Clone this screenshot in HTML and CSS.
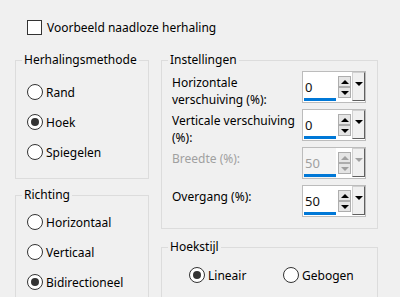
FILE: index.html
```
<!DOCTYPE html>
<html>

<head>
    <title>Naadloze herhaling</title>
    <link rel="stylesheet" href="styles.css">
</head>

<body>
    <!-- Preview toggle -->
    <label class="check-row">
        <input type="checkbox">
        <span>Voorbeeld naadloze herhaling</span>
    </label>

    <div class="columns">
        <div class="col col-left">
            <!-- Repeat method -->
            <fieldset class="group group-method">
                <legend>Herhalingsmethode</legend>
                <div class="group-body">
                    <label class="radio"><input type="radio" name="method"><span>Rand</span></label>
                    <label class="radio"><input type="radio" name="method" checked><span>Hoek</span></label>
                    <label class="radio"><input type="radio" name="method"><span>Spiegelen</span></label>
                </div>
            </fieldset>

            <!-- Direction -->
            <fieldset class="group group-dir">
                <legend>Richting</legend>
                <div class="group-body">
                    <label class="radio"><input type="radio" name="dir"><span>Horizontaal</span></label>
                    <label class="radio"><input type="radio" name="dir"><span>Verticaal</span></label>
                    <label class="radio"><input type="radio" name="dir" checked><span>Bidirectioneel</span></label>
                </div>
            </fieldset>
        </div>

        <div class="col col-right">
            <!-- Settings with spinners -->
            <fieldset class="group group-settings">
                <legend>Instellingen</legend>
                <div class="group-body settings-grid">
                    <div class="field-label">Horizontale<br>verschuiving (%):</div>
                    <div class="spin">
                        <div class="spin-value"><span>0</span><i class="spin-bar"></i></div>
                        <div class="spin-arrows">
                            <span class="spin-btn"><i class="tri tri-up"></i></span>
                            <span class="spin-btn"><i class="tri tri-down"></i></span>
                        </div>
                        <span class="spin-drop"><i class="tri tri-down"></i></span>
                    </div>

                    <div class="field-label">Verticale verschuiving<br>(%):</div>
                    <div class="spin">
                        <div class="spin-value"><span>0</span><i class="spin-bar"></i></div>
                        <div class="spin-arrows">
                            <span class="spin-btn"><i class="tri tri-up"></i></span>
                            <span class="spin-btn"><i class="tri tri-down"></i></span>
                        </div>
                        <span class="spin-drop"><i class="tri tri-down"></i></span>
                    </div>

                    <div class="field-label disabled">Breedte (%):</div>
                    <div class="spin disabled">
                        <div class="spin-value"><span>50</span><i class="spin-bar"></i></div>
                        <div class="spin-arrows">
                            <span class="spin-btn"><i class="tri tri-up"></i></span>
                            <span class="spin-btn"><i class="tri tri-down"></i></span>
                        </div>
                        <span class="spin-drop"><i class="tri tri-down"></i></span>
                    </div>

                    <div class="field-label">Overgang (%):</div>
                    <div class="spin">
                        <div class="spin-value"><span>50</span><i class="spin-bar"></i></div>
                        <div class="spin-arrows">
                            <span class="spin-btn"><i class="tri tri-up"></i></span>
                            <span class="spin-btn"><i class="tri tri-down"></i></span>
                        </div>
                        <span class="spin-drop"><i class="tri tri-down"></i></span>
                    </div>
                </div>
            </fieldset>

            <!-- Corner style -->
            <fieldset class="group group-corner">
                <legend>Hoekstijl</legend>
                <div class="group-body radio-line">
                    <label class="radio"><input type="radio" name="corner" checked><span>Lineair</span></label>
                    <label class="radio"><input type="radio" name="corner"><span>Gebogen</span></label>
                </div>
            </fieldset>
        </div>
    </div>
</body>

</html>
```
FILE: styles.css
```
/* Basic page look, like a dialog */
body {
    margin: 0;
    background-color: #f0f0f0;
    font-family: "Noto Sans", "Open Sans", sans-serif;
    font-size: 12px;
    color: #000;
    overflow: hidden;
}

/* Preview checkbox */
.check-row {
    display: flex;
    align-items: center;
    gap: 5px;
    height: 16px;
    margin: 19px 0 0 27px;
}

.check-row input {
    appearance: none;
    margin: 0;
    width: 15px;
    height: 15px;
    border: 1px solid #333;
    background-color: #fff;
}

/* Two columns of group boxes */
.columns {
    display: flex;
    gap: 12px;
    margin: 17px 0 0 15px;
}

.col-left {
    width: 134px;
}

.col-right {
    width: 217px;
}

/* Group boxes */
.group {
    margin: 0;
    padding: 0;
    border: 1px solid #dcdcdc;
    min-width: 0;
}

.group legend {
    margin-left: 6px;
    padding: 0 2px;
    line-height: 16px;
}

.group-method .group-body {
    padding: 9px 0 11px 11px;
}

.group-dir {
    margin-top: 8px;
}

.group-dir .group-body {
    padding: 4px 0 30px 11px;
}

/* Radio buttons */
.radio {
    display: flex;
    align-items: center;
    gap: 3px;
    height: 30px;
}

.radio input {
    appearance: none;
    margin: 0;
    width: 16px;
    height: 16px;
    border: 1px solid #333;
    border-radius: 50%;
    background-color: #fff;
    display: grid;
    place-items: center;
}

.radio input:checked::after {
    content: "";
    width: 8px;
    height: 8px;
    border-radius: 50%;
    background-color: #333;
}

/* Settings grid */
.settings-grid {
    display: grid;
    grid-template-columns: 1fr 64px;
    grid-auto-rows: 32px;
    row-gap: 6px;
    padding: 3px 11px 11px 10px;
}

.field-label {
    margin-top: 3px;
    line-height: 17px;
    white-space: nowrap;
}

.field-label.disabled {
    color: #a0a0a0;
}

/* Spinner control */
.spin {
    display: flex;
    height: 32px;
    box-sizing: border-box;
    border: 1px solid #bcbcbc;
    background-color: #fff;
}

.spin-value {
    width: 33px;
    display: flex;
    flex-direction: column;
    justify-content: center;
    position: relative;
    padding-left: 2px;
    box-sizing: border-box;
    color: #111;
    font-size: 13px;
}

.spin-bar {
    position: absolute;
    left: 1px;
    right: 0;
    bottom: 1px;
    height: 3px;
    background-color: #0078d7;
}

.spin-arrows {
    display: flex;
    flex-direction: column;
    margin-left: 2px;
    align-self: center;
}

.spin-btn {
    width: 13px;
    height: 11px;
    box-sizing: border-box;
    border: 1px solid #adadad;
    background-color: #e5e5e5;
    display: grid;
    place-items: center;
}

.spin-drop {
    width: 13px;
    height: 29px;
    margin-left: 1px;
    box-sizing: border-box;
    border: 1px solid #d0d0d0;
    border-right-color: #606060;
    border-bottom-color: #606060;
    background-color: #f0f0f0;
    display: flex;
    justify-content: center;
    padding-top: 9px;
}

/* Small triangles */
.tri {
    width: 0;
    height: 0;
    border-left: 4px solid transparent;
    border-right: 4px solid transparent;
}

.tri-up {
    border-bottom: 4px solid #000;
}

.tri-down {
    border-top: 4px solid #000;
}

.spin.disabled .spin-value {
    background-color: #f4f4f4;
    color: #a0a0a0;
}

.spin.disabled .tri-up {
    border-bottom-color: #a0a0a0;
}

.spin.disabled .tri-down {
    border-top-color: #a0a0a0;
}

/* Corner style */
.group-corner {
    margin-top: 10px;
}

.radio-line {
    display: flex;
    padding: 5px 0 20px 27px;
}

.radio-line .radio {
    width: 98px;
}
```
